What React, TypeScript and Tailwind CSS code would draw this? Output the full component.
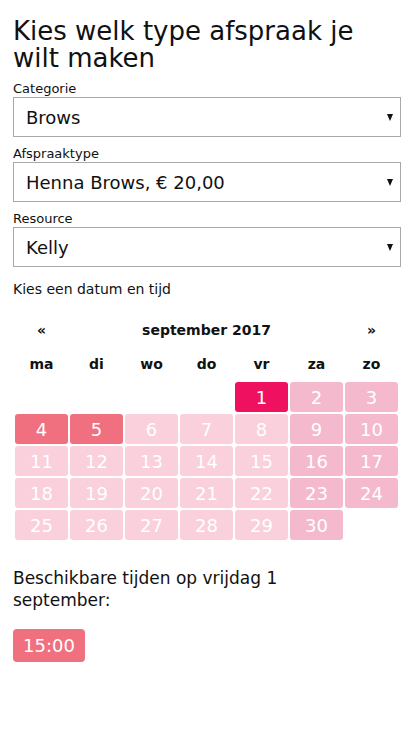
const weekday = "bg-[#f9d0dc]";
const weekend = "bg-[#f5b9cd]";

type Day = { n: number; cls: string };

const days: Day[] = Array.from({ length: 30 }, (_, i) => {
  const n = i + 1;
  const col = (n + 3) % 7; // 1 sept 2017 is a friday (col 4)
  let cls = col >= 5 ? weekend : weekday;
  if (n === 1) cls = "bg-[#ef1160]";
  if (n === 4 || n === 5) cls = "bg-[#f07080]";
  return { n, cls };
});

const SelectBox = ({ label, value }: { label: string; value: string }) => (
  <div className="flex flex-col">
    <label className="text-[13px] leading-[17px] text-[#111]">{label}</label>
    <div className="h-[40px] border border-[#a9a9a9] flex items-center justify-between pl-[12px] pr-[7px]">
      <span className="text-[18px] text-[#111]">{value}</span>
      <svg width="6" height="7" viewBox="0 0 6 7">
        <path d="M0 0 H6 L3 7 Z" fill="#111" />
      </svg>
    </div>
  </div>
);

export default function App() {
  return (
    <div
      className="w-[414px] min-h-[736px] bg-white px-[13px] pt-[18px] text-[#111]"
      style={{ fontFamily: '"DejaVu Sans", Verdana, sans-serif' }}
    >
      <h1 className="text-[26px] leading-[27px] font-normal mb-[8px]">
        Kies welk type afspraak je wilt maken
      </h1>

      <div className="flex flex-col gap-[8px]">
        <SelectBox label="Categorie" value="Brows" />
        <SelectBox label="Afspraaktype" value="Henna Brows, € 20,00" />
        <SelectBox label="Resource" value="Kelly" />
      </div>

      <p className="text-[14px] leading-[18px] mt-[13px]">Kies een datum en tijd</p>

      {/* calendar */}
      <div className="ml-[2px] mt-[22px] w-[383px]">
        <div className="grid grid-cols-[repeat(7,53px)] gap-x-[2px] h-[34px] items-start text-[14px] leading-[20px] font-bold">
          <span className="text-center">«</span>
          <span className="col-span-5 text-center">september 2017</span>
          <span className="text-center">»</span>
        </div>
        <div className="grid grid-cols-[repeat(7,53px)] gap-x-[2px] h-[28px] items-start text-[14px] leading-[20px] font-bold">
          {["ma", "di", "wo", "do", "vr", "za", "zo"].map((d) => (
            <span key={d} className="text-center">
              {d}
            </span>
          ))}
        </div>
        <div className="grid grid-cols-[repeat(7,53px)] auto-rows-[30px] gap-[2px]">
          <div className="col-span-4" />
          {days.map((d) => (
            <div
              key={d.n}
              className={`${d.cls} rounded-[3px] flex items-center justify-center text-white text-[18px]`}
            >
              {d.n}
            </div>
          ))}
        </div>
      </div>

      <p className="text-[17px] leading-[22px] mt-[27px] w-[320px]">
        Beschikbare tijden op vrijdag 1 september:
      </p>

      <button className="mt-[18px] h-[33px] px-[10px] rounded-[4px] bg-[#f07080] text-white text-[18px]">
        15:00
      </button>
    </div>
  );
}
